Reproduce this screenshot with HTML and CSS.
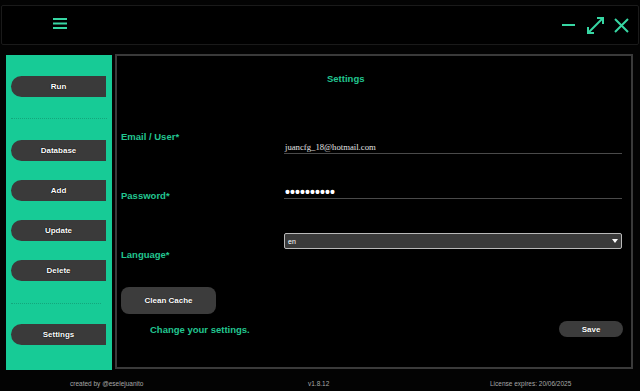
FILE: index.html
```html
<!DOCTYPE html>
<html>
<head>
<meta charset="utf-8">
<link rel="stylesheet" href="styles.css">
</head>
<body>
<div class="app">
  <header class="topbar">
    <div class="menu-icon">
      <svg width="14" height="13" viewBox="0 0 14 13"><rect x="0" y="1" width="14" height="2" fill="#37d6a3"/><rect x="0" y="5.5" width="14" height="2" fill="#37d6a3"/><rect x="0" y="10" width="14" height="2" fill="#37d6a3"/></svg>
    </div>
    <div class="win-controls">
      <svg class="ic-min" width="14" height="4" viewBox="0 0 14 4"><rect x="0" y="1" width="13" height="2" fill="#37d6a3"/></svg>
      <svg class="ic-max" width="19" height="19" viewBox="0 0 19 19" fill="none" stroke="#37d6a3" stroke-width="2"><path d="M2 17 L17 2"/><path d="M11 2 H17 V8"/><path d="M2 11 V17 H8"/></svg>
      <svg class="ic-close" width="15" height="15" viewBox="0 0 15 15" stroke="#37d6a3" stroke-width="2"><path d="M1 1 L14 14 M14 1 L1 14"/></svg>
    </div>
  </header>
  <div class="content">
    <nav class="sidebar">
      <button class="nav-btn first">Run</button>
      <div class="sep"></div>
      <button class="nav-btn after-sep">Database</button>
      <button class="nav-btn">Add</button>
      <button class="nav-btn">Update</button>
      <button class="nav-btn">Delete</button>
      <div class="sep sep2"></div>
      <button class="nav-btn after-sep2">Settings</button>
    </nav>
    <main class="panel">
      <h1 class="title">Settings</h1>
      <div class="row row-email">
        <label class="label">Email / User*</label>
        <div class="field"><span class="input-text">juancfg_18@hotmail.com</span></div>
      </div>
      <div class="row row-pass">
        <label class="label">Password*</label>
        <div class="field"><span class="dots">••••••••••</span></div>
      </div>
      <div class="row row-lang">
        <label class="label">Language*</label>
        <div class="select"><span>en</span><span class="caret"></span></div>
      </div>
      <button class="cache-btn">Clean Cache</button>
      <div class="bottom-row">
        <span class="status">Change your settings.</span>
        <button class="save-btn">Save</button>
      </div>
    </main>
  </div>
  <footer class="footer">
    <span>created by @eselejuanito</span>
    <span>v1.8.12</span>
    <span>License expires: 20/06/2025</span>
  </footer>
</div>
</body>
</html>
```
FILE: styles.css
```css
* { box-sizing: border-box; }
html, body { margin: 0; padding: 0; background: #000; }
body { width: 640px; height: 391px; overflow: hidden; font-family: "Liberation Sans", Arial, sans-serif; }
.app { width: 640px; height: 391px; background: #030303; padding-top: 5px; }

.topbar {
  margin: 0 1px;
  height: 40px;
  border: 1px solid #1a1a1a;
  border-radius: 2px;
  background: #000;
  display: flex;
  align-items: center;
  padding-left: 51px;
  padding-right: 9px;
}
.menu-icon { display: flex; margin-top: -3px; }
.win-controls { margin-left: auto; display: flex; align-items: center; gap: 8px; }
.ic-max { margin-left: 2px; }
.ic-close { margin-left: 1px; }

.content {
  display: flex;
  margin-top: 9px;
  padding-left: 6px;
  height: 315px;
}
.sidebar {
  width: 106px;
  height: 315px;
  margin-top: 1px;
  background: #17cb96;
  display: flex;
  flex-direction: column;
  padding: 21px 5px 0 5px;
}
.nav-btn {
  height: 21px;
  width: 95px;
  border: none;
  border-radius: 11px 0 0 11px;
  background: #3a3a3a;
  color: #fff;
  font-family: "Liberation Sans", Arial, sans-serif;
  font-weight: bold;
  font-size: 8px;
  text-shadow: 0 0 1px #000, 0 0 1px #000;
  padding: 0;
  margin-top: 19px;
  flex: none;
}
.nav-btn.first { margin-top: 0; }
.sep { height: 0; border-top: 1px dotted #13a77c; margin-top: 21px; }
.sep2 { margin-top: 22px; width: 90px; }
.nav-btn.after-sep { margin-top: 21px; }
.nav-btn.after-sep2 { margin-top: 20px; }

.panel {
  margin-left: 3px;
  width: 518px;
  height: 315px;
  border: 2px solid #3a3a3a;
  background: #000;
  display: flex;
  flex-direction: column;
  padding: 17px 8px 0 4px;
}
.title {
  margin: 0;
  font-size: 9.5px;
  line-height: 12px;
  font-weight: bold;
  color: #22c690;
  padding-left: 206px;
}
.row { display: flex; }
.label {
  width: 163px;
  flex: none;
  font-size: 9.5px;
  line-height: 12px;
  font-weight: bold;
  color: #22c690;
}
.row-email { margin-top: 40px; height: 59px; }
.row-email .label { padding-top: 6px; }
.row-email .field { margin-top: 16px; }
.row-pass { height: 46px; }
.row-pass .label { padding-top: 6px; }
.row-pass .field { margin-top: 2px; }
.row-lang { height: 50px; }
.row-lang .label { padding-top: 19px; }

.field {
  width: 338px;
  height: 13px;
  border-bottom: 1px solid #4a4a4a;
  display: flex;
  align-items: center;
  padding-left: 1px;
}
.input-text {
  font-family: "Liberation Serif", "Times New Roman", serif;
  font-size: 8.7px;
  color: #e0e0e0;
  line-height: 12px;
}
.dots {
  font-family: "Liberation Sans", Arial, sans-serif;
  font-size: 14px;
  font-weight: bold;
  color: #fff;
  line-height: 12px;
  letter-spacing: 0.1px;
}
.select {
  margin-top: 3px;
  width: 338px;
  height: 16px;
  background: #3a3a3a;
  border: 1px solid #b9b9b9;
  border-radius: 2px;
  display: flex;
  align-items: center;
  padding-left: 3px;
  font-size: 7px;
  color: #fff;
}
.caret {
  margin-left: auto;
  margin-right: 3px;
  width: 0;
  height: 0;
  border-left: 3px solid transparent;
  border-right: 3px solid transparent;
  border-top: 4px solid #fff;
}

.cache-btn {
  margin-top: 7px;
  width: 95px;
  height: 27px;
  border: none;
  border-radius: 8px;
  background: #3c3c3c;
  color: #fff;
  font-family: "Liberation Sans", Arial, sans-serif;
  font-weight: bold;
  font-size: 8px;
  text-shadow: 0 0 1px #000;
  padding: 0;
  flex: none;
}
.bottom-row {
  display: flex;
  margin-top: 7px;
  align-items: flex-start;
}
.status {
  margin-left: 29px;
  padding-top: 3px;
  font-size: 9.5px;
  line-height: 12px;
  font-weight: bold;
  color: #22c690;
}
.save-btn {
  margin-left: auto;
  width: 64px;
  height: 16px;
  border: none;
  border-radius: 8px;
  background: #3c3c3c;
  color: #fff;
  font-family: "Liberation Sans", Arial, sans-serif;
  font-weight: bold;
  font-size: 8px;
  text-shadow: 0 0 1px #000;
  padding: 0;
}

.footer {
  display: grid;
  grid-template-columns: 238px 182px auto;
  padding-left: 70px;
  margin-top: 10px;
  font-size: 6.5px;
  line-height: 10px;
  color: #a8a8a8;
}
```
